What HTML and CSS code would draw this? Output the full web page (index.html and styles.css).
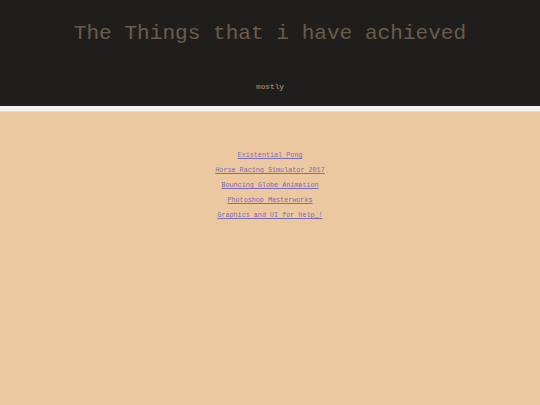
FILE: index.html
```html
<!DOCTYPE html>
<html>
<head>
<meta charset="utf-8">
<link rel="stylesheet" href="styles.css">
</head>
<body>
<header class="top">
  <h1 class="title">The Things that i have achieved</h1>
  <p class="sub">mostly</p>
</header>
<div class="strip"></div>
<main class="content">
  <ul class="links">
    <li><a href="#">Existential Pong</a></li>
    <li><a href="#">Horse Racing Simulator 2017</a></li>
    <li><a href="#">Bouncing Globe Animation</a></li>
    <li><a href="#">Photoshop Masterworks</a></li>
    <li><a href="#">Graphics and UI for help_!</a></li>
  </ul>
</main>
</body>
</html>
```

FILE: styles.css
```css
html, body {
  margin: 0;
  padding: 0;
  height: 100%;
}
body {
  background: #ecc8a0;
  font-family: "Liberation Mono", "Courier New", monospace;
}
.top {
  background: #201e1c;
  height: 106px;
  box-sizing: border-box;
  padding-top: 20px;
  text-align: center;
}
.title {
  margin: 0;
  font-weight: normal;
  font-size: 21.1px;
  line-height: 26px;
  color: #6a5b4c;
}
.sub {
  margin: 36px 0 0;
  font-size: 7.8px;
  line-height: 10px;
  font-weight: bold;
  color: #8a7662;
}
.strip {
  height: 5px;
  background: #f2f2f2;
  border-bottom: 1px solid #e2dcd4;
}
.content {
  padding-top: 36px;
  text-align: center;
}
.links {
  list-style: none;
  margin: 0;
  padding: 0;
}
.links li {
  font-size: 6.75px;
  line-height: 15px;
}
.links a {
  color: #7a6cb0;
  text-decoration: underline;
}
```
